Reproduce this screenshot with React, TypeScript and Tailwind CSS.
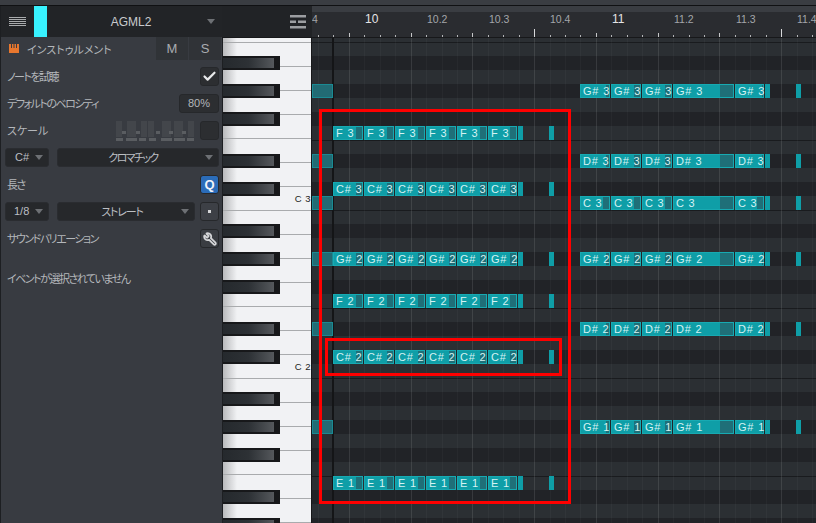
import { Check, Wrench } from "lucide-react";

const UI_FONT = "[font-family:'Noto_Sans_CJK_JP','Liberation_Sans',sans-serif] [font-feature-settings:'palt']";

const ROW_COUNT = 35;
const BLACK_ROWS = [1, 3, 5, 8, 10]; // offsets inside the octave, counted from B
const ROW_H = 14;
const rowTop = (row: number) => row * ROW_H;

const LEFT_NOTES = [
  { label: "F 3", y: 126 },
  { label: "C# 3", y: 182 },
  { label: "G# 2", y: 252 },
  { label: "F 2", y: 294 },
  { label: "C# 2", y: 350 },
  { label: "E 1", y: 476 },
];

const RIGHT_NOTES = [
  { label: "G# 3", y: 84 },
  { label: "D# 3", y: 154 },
  { label: "C 3", y: 196 },
  { label: "G# 2", y: 252 },
  { label: "D# 2", y: 322 },
  { label: "G# 1", y: 420 },
];

const GHOSTS = [84, 154, 196, 252, 322, 420];

const LEFT_SLOTS = [
  [333, 30],
  [364, 30],
  [395, 30],
  [426, 30],
  [457, 30],
  [488, 29],
];
const RIGHT_SLOTS = [
  [580, 30, 3],
  [611, 30, 6],
  [642, 30, 6],
  [673, 61, 13],
  [735, 29, 1],
];

const RULER = [
  { x: 364, label: "10", major: true },
  { x: 426, label: "10.2" },
  { x: 488, label: "10.3" },
  { x: 549, label: "10.4" },
  { x: 611, label: "11", major: true },
  { x: 673, label: "11.2" },
  { x: 735, label: "11.3" },
  { x: 796, label: "11.4" },
];

const TICK_COUNT = 33;
const tickX = (i: number) => 318 + i * 15.44;

function Note({ x, y, w, dark, label }: { x: number; y: number; w: number; dark: number; label: string }) {
  return (
    <div
      className="absolute h-[14px] border border-[#17aab2] bg-[#0f9ea7]"
      style={{ left: x - 312, top: y - 42, width: w }}
    >
      {dark > 0 && <div className="absolute bottom-0 right-0 top-0 bg-[#1f6f78]" style={{ width: dark }} />}
      <span className="absolute left-[2px] top-[-1px] whitespace-pre font-['Liberation_Sans',sans-serif] text-[11px] leading-[14px] tracking-[0.8px] text-[#d5f2f3]">
        {label}
      </span>
    </div>
  );
}

function Stub({ x, y }: { x: number; y: number }) {
  return <div className="absolute h-[14px] w-[5px] bg-[#0f9ea7]" style={{ left: x - 312, top: y - 42 }} />;
}

function Select({ label, className, textClass }: { label: string; className: string; textClass?: string }) {
  return (
    <div className={`relative flex h-[19px] items-center rounded-[3px] border border-[#2a2c30] bg-[#26282b] ${className}`}>
      <span className={`text-[11px] leading-none text-[#bcbfc3] ${textClass ?? ""}`}>{label}</span>
      <span className="absolute right-[5px] top-[6px] h-0 w-0 border-x-[4px] border-t-[5px] border-x-transparent border-t-[#6d7074]" />
    </div>
  );
}

function SquareButton({ children, className }: { children?: React.ReactNode; className?: string }) {
  return (
    <div className={`flex h-[19px] w-[19px] shrink-0 items-center justify-center rounded-[3px] border border-[#26282b] ${className ?? "bg-[#2c2e31]"}`}>
      {children}
    </div>
  );
}

function Row({ children }: { children: React.ReactNode }) {
  return <div className="flex h-[27px] items-center justify-between pl-[6px] pr-[3px]">{children}</div>;
}

function Label({ children, tight }: { children: React.ReactNode; tight?: boolean }) {
  return <span className={`text-[11px] leading-none text-[#b4b7bb] ${tight ? "tracking-[-1.5px]" : ""}`}>{children}</span>;
}

function ScaleKeys() {
  return (
    <svg width="78" height="20" viewBox="0 0 78 20" className="mr-[6px]">
      {[0, 11, 25, 32, 46, 58, 72].map((x, i) => (
        <rect key={x} x={x} y="0" width={i === 1 || i === 4 || i === 5 ? 9 : 6} height="16" fill="#43464b" />
      ))}
      {[6, 20, 40, 53, 66].map(x => (
        <rect key={x} x={x} y="10" width="4" height="3" fill="#5a5d61" />
      ))}
      {[0, 10, 23, 33, 45, 58, 71].map((x, i) => (
        <rect key={x} x={x} y="17" width={i === 1 || i === 4 || i === 5 ? 11 : 7} height="3" fill="#5a5d61" />
      ))}
    </svg>
  );
}

function Sidebar() {
  return (
    <aside className={`w-[222px] shrink-0 border-l border-[#1d1f22] bg-[#383b41] ${UI_FONT}`}>
      <div className="flex h-[31px] items-center bg-[#222427]">
        <div className="ml-[8px] flex w-[17px] flex-col gap-[1px]">
          {[0, 1, 2, 3, 4].map(i => (
            <div key={i} className="h-[1px] bg-[#a9abad]" />
          ))}
        </div>
        <div className="ml-[8px] h-[31px] w-[13px] bg-[#38f2ff]" />
        <div className="flex-1 pl-[8px] text-center font-['Liberation_Sans',sans-serif] text-[12px] text-[#c9cbce]">AGML2</div>
        <span className="mr-[7px] h-0 w-0 border-x-[4px] border-t-[5px] border-x-transparent border-t-[#6d7074]" />
      </div>

      <div className="mb-[3px] flex h-[23px] items-center pl-[8px]">
        <svg width="10" height="9" viewBox="0 0 10 9" className="shrink-0">
          <path d="M0 0h2v4h1V0h1.500v4h1V0H7v4h1V0h2v9H0z" fill="#e8772e" />
        </svg>
        <span className="ml-[8px] mt-[2px] flex-1 text-[11px] leading-none text-[#b4b7bb]">インストゥルメント</span>
        <div className="mr-[1px] flex h-[23px] gap-[1px]">
          <div className="flex w-[32px] items-center justify-center bg-[#303337] font-['Liberation_Sans',sans-serif] text-[13px] text-[#a9acb0]">M</div>
          <div className="flex w-[32px] items-center justify-center bg-[#303337] font-['Liberation_Sans',sans-serif] text-[13px] text-[#a9acb0]">S</div>
        </div>
      </div>

      <Row>
        <Label tight>ノートを試聴</Label>
        <SquareButton>
          <Check size={15} strokeWidth={3.5} className="text-[#e8e9ea]" />
        </SquareButton>
      </Row>
      <Row>
        <Label tight>デフォルトのベロシティ</Label>
        <div className="flex h-[19px] w-[40px] items-center justify-center rounded-[3px] border border-[#26282b] bg-[#2c2e31] font-['Liberation_Sans',sans-serif] text-[11px] text-[#b4b7bb]">
          80%
        </div>
      </Row>
      <Row>
        <Label>スケール</Label>
        <div className="flex items-center">
          <ScaleKeys />
          <SquareButton />
        </div>
      </Row>
      <div className="flex h-[27px] items-center gap-[8px] pl-[4px] pr-[3px]">
        <Select label="C#" className="w-[44px] pl-[9px]" textClass="font-['Liberation_Sans',sans-serif]" />
        <Select label="クロマチック" className="flex-1 justify-center pr-[10px]" textClass="tracking-[-1.6px]" />
      </div>
      <Row>
        <Label tight>長さ</Label>
        <SquareButton className="bg-[#2b6cb8]">
          <span className="font-['Liberation_Sans',sans-serif] text-[13px] font-bold leading-none text-[#f1f4f8]">Q</span>
        </SquareButton>
      </Row>
      <div className="flex h-[27px] items-center gap-[8px] pl-[4px] pr-[3px]">
        <Select label="1/8" className="w-[44px] pl-[8px]" textClass="font-['Liberation_Sans',sans-serif]" />
        <Select label="ストレート" className="flex-1 justify-center pr-[8px]" textClass="tracking-[-1.2px]" />
        <div className="-ml-[3px] flex h-[19px] w-[19px] shrink-0 items-center justify-center rounded-[3px] border border-[#26282b] bg-[#3d4046]">
          <div className="h-[3px] w-[3px] bg-[#d5d6d8]" />
        </div>
      </div>
      <Row>
        <Label tight>サウンドバリエーション</Label>
        <SquareButton className="bg-[#3a3d42]">
          <Wrench size={14} strokeWidth={3} className="-scale-x-100 text-[#d5d6d8]" />
        </SquareButton>
      </Row>
      <div className="mt-[12px] pl-[6px]">
        <Label tight>イベントが選択されていません</Label>
      </div>
    </aside>
  );
}

function Piano() {
  const whites = Array.from({ length: 21 }, (_, i) => i);
  const blackRows = Array.from({ length: ROW_COUNT }, (_, i) => i).filter(i => BLACK_ROWS.includes(i % 12));
  return (
    <div className="relative h-[485px] w-[89px] shrink-0 overflow-hidden border-l border-[#1d1f22] bg-[#f1f2f4]">
      <div className="absolute inset-y-0 left-0 w-[14px] bg-gradient-to-r from-[#b9babc] to-[#f1f2f4]" />
      <div className="h-[4px]" />
      {whites.map(i => (
        <div key={i} className="relative h-[24px] border-t border-[#a9abad]">
          {i === 7 && (
            <span className="absolute right-0 top-[-17px] font-['Liberation_Sans',sans-serif] text-[9.5px] leading-[10px] tracking-[0.5px] text-[#1c1e22]">C 3</span>
          )}
          {i === 14 && (
            <span className="absolute right-0 top-[-17px] font-['Liberation_Sans',sans-serif] text-[9.5px] leading-[10px] tracking-[0.5px] text-[#1c1e22]">C 2</span>
          )}
        </div>
      ))}
      {blackRows.map(r => (
        <div
          key={r}
          className="absolute left-0 flex h-[14px] w-[57px]"
          style={{ top: rowTop(r) + 4 }}
        >
          <div className="flex-1 border-y-2 border-[#17181a] bg-gradient-to-r from-[#25292d] via-[#2d3135] to-[#55585c]" />
          <div className="w-[6px] bg-[#17181a]" />
        </div>
      ))}
    </div>
  );
}

function Grid() {
  return (
    <div className="relative h-[485px] flex-1 overflow-hidden border-l border-[#17181a] bg-[#2b2f33]">
      <div className="flex flex-col pt-[4px]">
        {Array.from({ length: ROW_COUNT }, (_, i) => {
          const black = BLACK_ROWS.includes(i % 12);
          const line = i % 12 === 0 || i % 12 === 7;
          return (
            <div
              key={i}
              className={`h-[14px] shrink-0 ${black ? "bg-[#212327]" : "bg-[#2b2f33]"} ${line ? "border-t border-[#191b1e]" : ""}`}
            />
          );
        })}
      </div>
      {Array.from({ length: TICK_COUNT }, (_, i) => (
        <div
          key={i}
          className={`absolute inset-y-0 w-px ${(i + 2) % 4 === 0 ? "bg-white/10" : "bg-white/[0.03]"}`}
          style={{ left: tickX(i) - 312 }}
        />
      ))}
      <div className="absolute inset-y-0 left-[20px] w-[2px] bg-[#141517]" />

      <div className="absolute inset-x-0 bottom-0 top-[4px]">
        {GHOSTS.map(y => (
          <div
            key={y}
            className="absolute left-0 h-[14px] w-[21px] border border-[#1a8a93] bg-[#226b74]"
            style={{ top: y - 42 }}
          />
        ))}
        {LEFT_NOTES.map(n => (
          <div key={n.label + n.y}>
            {LEFT_SLOTS.map(([x, w]) => (
              <Note key={x} x={x} y={n.y} w={w} dark={6} label={n.label} />
            ))}
            <Stub x={518} y={n.y} />
            <Stub x={549} y={n.y} />
          </div>
        ))}
        {RIGHT_NOTES.map(n => (
          <div key={n.label + n.y}>
            {RIGHT_SLOTS.map(([x, w, dark]) => (
              <Note key={x} x={x} y={n.y} w={w} dark={n.label === "C 3" ? Math.max(dark, 6) : dark} label={n.label} />
            ))}
            <Stub x={765} y={n.y} />
            <Stub x={796} y={n.y} />
          </div>
        ))}
      </div>
    </div>
  );
}

function Ruler() {
  return (
    <div className="flex h-[32px] shrink-0 border-b border-[#17181a]">
      <div className="flex w-[90px] shrink-0 items-center justify-end bg-[#212326] pr-[6px]">
        <svg width="16" height="14" viewBox="0 0 16 14">
          <path d="M0 0h16v2.500H0zM0 5.500h6v2.500H0zM8 5.500h8v2.500H8zM0 11h16v2.500H0z" fill="#9c9ea1" />
        </svg>
      </div>
      <div className="relative flex-1 overflow-hidden bg-[#2a2c30]">
        <div className="h-[6px] bg-[#3a3d42]" />
        <span className="absolute left-0 top-[6px] font-['Liberation_Sans',sans-serif] text-[10.5px] leading-[14px] text-[#a3a6aa]">4</span>
        {RULER.map(r => (
          <span
            key={r.x}
            className={`absolute whitespace-nowrap font-['Liberation_Sans',sans-serif] leading-[14px] ${r.major ? "top-[6px] text-[12px] font-normal text-[#e4e5e6]" : "top-[6px] text-[10.5px] text-[#a3a6aa]"}`}
            style={{ left: r.x - 312 + 1 }}
          >
            {r.label}
          </span>
        ))}
        {Array.from({ length: TICK_COUNT }, (_, i) => {
          const major = (i + 2) % 16 === 0;
          const mid = (i + 2) % 4 === 0;
          return (
            <div
              key={i}
              className={`absolute bottom-0 w-px ${major ? "h-[8px] bg-[#d8d9db]" : mid ? "h-[4px] bg-[#c6c7c9]" : "h-[2px] bg-[#b4b5b7]"}`}
              style={{ left: tickX(i) - 312 }}
            />
          );
        })}
      </div>
    </div>
  );
}

export default function App() {
  return (
    <div className="relative flex h-[523px] w-[816px] flex-col overflow-hidden bg-[#222427]">
      <div className="h-[5px] shrink-0 bg-[#3a3d42]" />
      <div className="h-px shrink-0 bg-[#101113]" />
      <div className="flex min-h-0 flex-1">
        <Sidebar />
        <div className="flex min-w-0 flex-1 flex-col">
          <Ruler />
          <div className="flex min-h-0 flex-1">
            <Piano />
            <Grid />
          </div>
        </div>
      </div>
      {/* red markup boxes drawn over the editor */}
      <div className="absolute left-[319px] top-[109px] h-[395px] w-[252px] border-[3px] border-[#ff0000]" />
      <div className="absolute left-[325px] top-[338px] h-[38px] w-[237px] border-[3px] border-[#ff0000]" />
    </div>
  );
}
